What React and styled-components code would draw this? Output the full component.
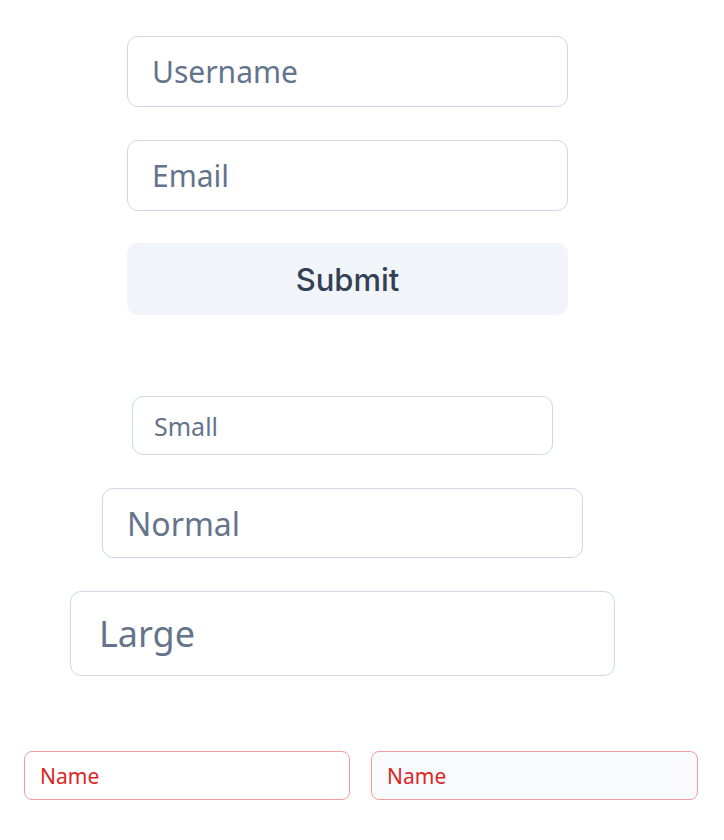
import React from 'react'
import styled, { createGlobalStyle } from 'styled-components'

const GlobalStyle = createGlobalStyle`
  html, body { margin:0; padding:0; background:#fff; }
  body { font-family:"Noto Sans", "Liberation Sans", sans-serif; }
  * { box-sizing:border-box; }
`

const Page = styled.div`
  width:724px;
  padding-top:36px;
  display:flex;
  flex-direction:column;
`

const Form = styled.form`
  display:flex;
  flex-direction:column;
  gap:33px;
  width:441px;
  margin-left:127px;
`

const TextField = styled.input`
  display:block;
  width:100%;
  height:71px;
  padding:0 24px;
  border:1.5px solid #cfd8e5;
  border-radius:11px;
  background:#fff;
  font-family:"Noto Sans", sans-serif;
  font-size:30px;
  color:#334155;
  outline:none;
  &::placeholder { color:#64748b; }
`

const SubmitButton = styled.button`
  height:72px;
  margin-top:-1px;
  border:none;
  border-radius:11px;
  background:#f1f5f9;
  color:#334155;
  font-family:"Inter", "Roboto", sans-serif;
  font-size:31px;
  font-weight:500;
  cursor:pointer;
`

const Sizes = styled.div`
  margin-top:81px;
  display:flex;
  flex-direction:column;
  gap:33px;
`

const sizeMap = {
  small: { w:421, h:59, ml:132, fs:25, px:21 },
  normal: { w:481, h:70, ml:102, fs:32, px:24 },
  large: { w:545, h:85, ml:70, fs:36, px:28 },
}

const SizedField = styled.input`
  display:block;
  width:${p => sizeMap[p.$size].w}px;
  height:${p => sizeMap[p.$size].h}px;
  margin-left:${p => sizeMap[p.$size].ml}px;
  padding:0 ${p => sizeMap[p.$size].px}px;
  border:1.5px solid #cfd8e5;
  border-radius:11px;
  background:#fff;
  font-family:"Noto Sans", sans-serif;
  font-size:${p => sizeMap[p.$size].fs}px;
  outline:none;
  &::placeholder { color:#64748b; }
`

const ErrorRow = styled.div`
  margin-top:75px;
  padding-left:24px;
  display:grid;
  grid-template-columns:326px 327px;
  gap:21px;
`

const ErrorField = styled.input`
  display:block;
  width:100%;
  height:49px;
  padding:0 15px;
  border:1.5px solid #f59b9b;
  border-radius:8px;
  background:${p => p.$filled ? '#f8fafc' : '#fff'};
  font-family:"Noto Sans", sans-serif;
  font-size:21px;
  outline:none;
  &::placeholder { color:#dc2626; }
`

export default function App() {
  return (
    <>
      <GlobalStyle />
      <Page>
        <Form onSubmit={e => e.preventDefault()}>
          <TextField placeholder="Username" />
          <TextField placeholder="Email" />
          <SubmitButton type="submit">Submit</SubmitButton>
        </Form>

        <Sizes>
          <SizedField $size="small" placeholder="Small" />
          <SizedField $size="normal" placeholder="Normal" />
          <SizedField $size="large" placeholder="Large" />
        </Sizes>

        <ErrorRow>
          <ErrorField placeholder="Name" />
          <ErrorField $filled placeholder="Name" />
        </ErrorRow>
      </Page>
    </>
  )
}
